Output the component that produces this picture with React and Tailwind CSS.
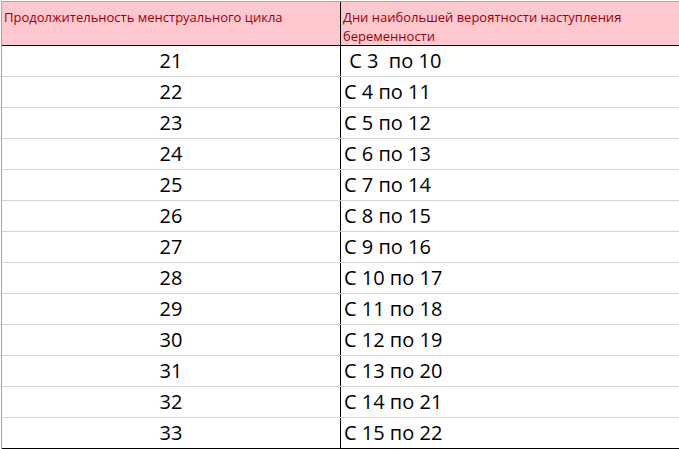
import React from "react";

const rows = [
  ["21", " С 3  по 10"],
  ["22", "С 4 по 11"],
  ["23", "С 5 по 12"],
  ["24", "С 6 по 13"],
  ["25", "С 7 по 14"],
  ["26", "С 8 по 15"],
  ["27", "С 9 по 16"],
  ["28", "С 10 по 17"],
  ["29", "С 11 по 18"],
  ["30", "С 12 по 19"],
  ["31", "С 13 по 20"],
  ["32", "С 14 по 21"],
  ["33", "С 15 по 22"],
];

export default function App() {
  return (
    <div className="w-[679px] h-[449px] bg-white pt-px pl-px overflow-hidden font-['Open_Sans',sans-serif] text-black">
      <div className="border-t border-l border-[#a6a6a6]">
        {/* header */}
        <div className="grid grid-cols-[338px_1fr] h-[44px] bg-[#ffc7ce] border-b border-black text-[13px] leading-[19px] text-[#9c0006]">
          <div className="pl-[2px] pt-[6px]">Продолжительность менструального цикла</div>
          <div className="border-l border-black pl-[2px] pt-[6px]">
            Дни наибольшей вероятности наступления
            <br />
            беременности
          </div>
        </div>
        {rows.map(([len, days], i) => (
          <div
            key={len}
            className={
              i === rows.length - 1
                ? "grid grid-cols-[338px_1fr] h-[31px] border-b border-black text-[20px] leading-[30px]"
                : "grid grid-cols-[338px_1fr] h-[31px] border-b border-[#d4d4d4] text-[20px] leading-[30px]"
            }
          >
            <div className="text-center">{len}</div>
            <div className="border-l border-black pl-[3px] whitespace-pre">{days}</div>
          </div>
        ))}
      </div>
    </div>
  );
}
